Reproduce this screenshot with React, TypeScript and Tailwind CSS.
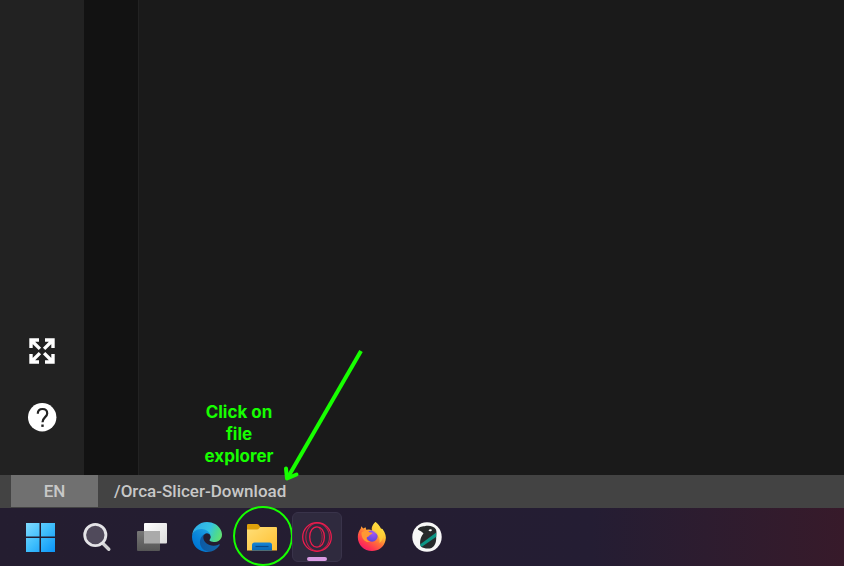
import type { ReactNode } from 'react';

function ExpandIcon() {
  return (
    <svg width="28" height="28" viewBox="0 0 28 28" fill="none" stroke="#fff" strokeWidth="3.4" aria-hidden="true">
      <path d="M3 11V3H11M3.500 3.500L11.900 11.900" />
      <path d="M17 3H25V11M24.500 3.500L16.100 11.900" />
      <path d="M3 17V25H11M3.500 24.500L11.900 16.100" />
      <path d="M17 25H25V17M24.500 24.500L16.100 16.100" />
    </svg>
  );
}

function HelpIcon() {
  return (
    <svg width="29" height="29" viewBox="0 0 29 29" aria-hidden="true">
      <circle cx="14.200" cy="14.200" r="14.200" fill="#fff" />
      <path d="M9.800 10.800C9.800 7.700 11.700 6 14.500 6S19.200 7.800 19.200 10.400C19.200 14 14.500 14.400 14.500 19.200" fill="none" stroke="#222" strokeWidth="2.2" />
      <rect x="13.300" y="21.500" width="2.400" height="2.400" fill="#222" />
    </svg>
  );
}

function WindowsIcon() {
  return (
    <svg width="30" height="30" viewBox="0 0 30 30" aria-hidden="true">
      <defs>
        <linearGradient id="win" x1="0" y1="0" x2="30" y2="30" gradientUnits="userSpaceOnUse">
          <stop stopColor="#86dcff" />
          <stop offset=".5" stopColor="#40bffc" />
          <stop offset="1" stopColor="#0a94f8" />
        </linearGradient>
      </defs>
      <path fill="url(#win)" d="M1 1H14.500V14.500H1zM16 1H30V14.500H16zM1 16H14.500V30H1zM16 16H30V30H16z" />
    </svg>
  );
}

function SearchIcon() {
  return (
    <svg width="30" height="30" viewBox="0 0 30 30" aria-hidden="true">
      <path d="M20.500 21L26.800 27.200" stroke="#d0d0d2" strokeWidth="3.400" strokeLinecap="round" />
      <circle cx="13.300" cy="13" r="10.600" fill="#504a5b" stroke="#e4e4e7" strokeWidth="2.800" />
    </svg>
  );
}

function TaskViewIcon() {
  return (
    <svg width="30" height="30" viewBox="0 0 30 30" aria-hidden="true">
      <defs>
        <linearGradient id="tvBack" x1="0" y1="0" x2="0" y2="1">
          <stop stopColor="#777" />
          <stop offset="1" stopColor="#565656" />
        </linearGradient>
        <linearGradient id="tvFront" x1="0" y1="0" x2="1" y2="1">
          <stop stopColor="#fff" />
          <stop offset="1" stopColor="#dcdcdc" />
        </linearGradient>
      </defs>
      <rect x="7" y="1" width="23" height="20.500" rx="1" fill="url(#tvFront)" />
      <rect x="0" y="9" width="23" height="20" rx="1" fill="url(#tvBack)" />
      <rect x="7" y="9" width="16" height="12.500" fill="#aaa" />
    </svg>
  );
}

function EdgeIcon() {
  return (
    <svg width="30" height="30" viewBox="0 0 256 256" aria-hidden="true">
      <defs>
        <linearGradient id="edgeDark" x1="63" y1="178" x2="241" y2="178" gradientUnits="userSpaceOnUse">
          <stop stopColor="#0c59a4" />
          <stop offset="1" stopColor="#1466a8" />
        </linearGradient>
        <linearGradient id="edgeBlue" x1="157" y1="100" x2="46" y2="221" gradientUnits="userSpaceOnUse">
          <stop stopColor="#1b9de2" />
          <stop offset=".6" stopColor="#0883d9" />
          <stop offset="1" stopColor="#0078d4" />
        </linearGradient>
        <linearGradient id="edgeTop" x1="20" y1="40" x2="250" y2="140" gradientUnits="userSpaceOnUse">
          <stop stopColor="#2eaee8" />
          <stop offset=".5" stopColor="#35c3e4" />
          <stop offset=".75" stopColor="#48d79a" />
          <stop offset="1" stopColor="#66e26e" />
        </linearGradient>
      </defs>
      <path fill="url(#edgeDark)" d="M231 190.500a93.700 93.700 0 0 1-10.500 4.700 101.900 101.900 0 0 1-35.900 6.500c-47.300 0-88.500-32.500-88.500-74.300a31.500 31.500 0 0 1 16.400-27.300c-42.800 1.800-53.800 46.400-53.800 72.500 0 73.900 68.100 81.400 82.800 81.400 7.900 0 19.800-2.300 27-4.600l1.300-.4a128.300 128.300 0 0 0 66.600-52.800 4 4 0 0 0-5.400-5.700z" />
      <path fill="url(#edgeBlue)" d="M105.700 241.400a79.200 79.200 0 0 1-22.700-21.300 80.700 80.700 0 0 1 29.500-120c3.200-1.500 8.500-4.100 15.600-4a32.400 32.400 0 0 1 25.700 13 31.900 31.900 0 0 1 6.300 18.700c0-.2 24.500-79.600-80-79.600-43.900 0-80 41.600-80 78.200a130.200 130.200 0 0 0 12.100 56 128 128 0 0 0 156.400 67 75.500 75.500 0 0 1-62.800-8z" />
      <path fill="url(#edgeTop)" d="M152.300 148.900c-.8 1-3.300 2.500-3.300 5.700 0 2.600 1.700 5.100 4.700 7.200 14.400 10 41.500 8.700 41.600 8.700a59.600 59.600 0 0 0 30.300-8.300 61.400 61.400 0 0 0 30.400-52.900c.3-22.400-8-37.300-11.300-43.900C223.500 23.900 177.700 0 128 0A128 128 0 0 0 0 126.200c.5-36.500 36.800-66 80-66 3.500 0 23.500.3 42 10 16.300 8.600 24.900 18.900 30.800 29.200 6.200 10.700 7.300 24.100 7.300 29.500 0 5.300-2.700 13.300-7.800 20z" />
    </svg>
  );
}

function FolderIcon() {
  return (
    <svg width="32" height="30" viewBox="0 0 32 30" aria-hidden="true">
      <defs>
        <linearGradient id="folder" x1="0" y1="0" x2="1" y2="1">
          <stop stopColor="#ffdf78" />
          <stop offset="1" stopColor="#ffbf30" />
        </linearGradient>
        <linearGradient id="tray" x1="0" y1="0" x2="0" y2="1">
          <stop stopColor="#1585d8" />
          <stop offset="1" stopColor="#0b67b2" />
        </linearGradient>
      </defs>
      <path fill="#dfa10b" d="M1 3.300Q1 2 2.300 2H11Q12 2 12.700 2.800L15 6V8H1z" />
      <path fill="url(#folder)" d="M1 7.500H11Q12.300 7.500 13.200 6.300L14.200 5H30Q31 5 31 6V28.500H1z" />
      <path fill="url(#tray)" d="M6 28.500V23Q6 20.500 8.500 20.500H23.500Q26 20.500 26 23V28.500z" />
      <path d="M9.500 24.500H22.500" stroke="#0a4784" strokeWidth="1.200" />
    </svg>
  );
}

function OperaIcon() {
  return (
    <svg width="32" height="32" viewBox="0 0 32 32" fill="none" stroke="#ee1c4d" aria-hidden="true">
      <circle cx="16" cy="16" r="14.300" strokeWidth="1.300" />
      <path d="M16 1.900C22 1.900 28.500 7.500 28.500 16S22 30.100 16 30.100C9.500 29.500 4.800 23.500 4.800 16S9.500 2.500 16 1.900z" strokeWidth="1.100" opacity=".75" />
      <path d="M16 5.800C11.800 5.800 8.700 10 8.700 16S11.800 26.200 16 26.200S23.400 22 23.400 16S20.200 5.800 16 5.800z" strokeWidth="1.300" />
      <path d="M18 7C22.200 11 22.200 21 18 25" strokeWidth="1" opacity=".6" />
    </svg>
  );
}

function FirefoxIcon() {
  return (
    <svg width="30" height="30" viewBox="0 0 30 30" aria-hidden="true">
      <defs>
        <linearGradient id="fox" x1="24" y1="2" x2="6" y2="28" gradientUnits="userSpaceOnUse">
          <stop stopColor="#fff44f" />
          <stop offset=".3" stopColor="#ffc230" />
          <stop offset=".55" stopColor="#ff7139" />
          <stop offset=".8" stopColor="#ff3750" />
          <stop offset="1" stopColor="#f5156c" />
        </linearGradient>
        <radialGradient id="globe" cx=".6" cy=".25" r=".8">
          <stop stopColor="#a256f5" />
          <stop offset="1" stopColor="#5a45d8" />
        </radialGradient>
      </defs>
      <path fill="url(#fox)" d="M18.500 0C20.500 1.300 22.500 3.800 23.500 6.500L25.500 7C28.500 11 29.500 15 28.500 18.500C27 25 21.500 29 15 29C7 29 .8 23 .8 15C.8 11.500 2 8.500 3.800 6.500L4.300 4.200L6.300 6.400L8.500 5.200L9.500 8C12 7.200 13.500 7.700 15 8.500C14 5.500 16 2 18.500 0z" />
      <circle cx="15" cy="14" r="5.700" fill="url(#globe)" />
      <path fill="#ff9833" d="M4.500 10.500C7 8 10.500 8.200 12.500 10.300L15.500 10.800C15.500 12.200 13.500 12.500 12.300 13.500C12 14.800 10.500 14.500 9.700 15.500C9 17.500 11 19.500 13.500 19.700C9 21.500 4 17 4.500 10.500z" />
      <path fill="#ffd43b" d="M15 8.500C17 6 17.500 3 18.500 0C23 3.500 26.500 9 26 15C25.500 18 24 20 22.500 21C23.500 15 20 11.500 15 8.500z" opacity=".7" />
    </svg>
  );
}

function OrcaIcon() {
  return (
    <svg width="30" height="30" viewBox="0 0 30 30" aria-hidden="true">
      <circle cx="15" cy="15" r="14.700" fill="#f7f7f7" />
      <path fill="#272a2b" d="M5.800 7.500C6.500 5 9.500 4.500 12.500 4.300C17 3 22 4.300 24 7.500C25 10 24 13 24.200 16C24.300 21 22.500 24.500 19.500 26C16.500 27.200 11.500 26.500 9 24.800C7.200 21 8 15.500 11.500 11.500C10 9.500 8 9 5.800 7.500z" />
      <path fill="#0d9585" d="M24.200 10.500L24.300 14.800L9.500 25L8 22.500z" />
      <path fill="#fff" d="M16.500 8.500C17.500 6.800 19.500 6.900 20 8C19.500 9.400 17.500 9.700 16.500 8.500z" />
    </svg>
  );
}

function TaskButton({ label, active, wide, children }: { label: string; active?: boolean; wide?: boolean; children: ReactNode }) {
  return (
    <button
      type="button"
      aria-label={label}
      className={`relative flex h-[50px] shrink-0 items-center justify-center rounded-md ${wide ? 'w-[54px]' : 'w-[50px]'} ${active ? 'border border-[#39334a] bg-[#2f2a3e]' : ''}`}
    >
      {children}
      {active && <span className="absolute bottom-0 h-1 w-5 rounded-full bg-[#d99be3]" />}
    </button>
  );
}

export default function App() {
  return (
    <div className="relative flex min-h-screen flex-col overflow-hidden bg-[#1a1a1a] font-['Roboto',sans-serif]">
      <div className="flex flex-1">
        <nav className="flex w-[84px] shrink-0 flex-col items-center justify-end gap-[38px] bg-[#222222] pb-[43px]">
          <button type="button" aria-label="Full screen"><ExpandIcon /></button>
          <button type="button" aria-label="Help"><HelpIcon /></button>
        </nav>
        <aside className="w-[55px] shrink-0 border-r border-[#222222] bg-[#121212]" />
        <main className="flex-1" />
      </div>

      <footer className="flex h-[33px] shrink-0 bg-[#434343] pl-[11px] text-[17px] leading-8 font-medium text-[#c8c8c8]">
        <button type="button" className="h-8 w-[87px] bg-[#707070]">EN</button>
        <span className="pl-4">/Orca-Slicer-Download</span>
      </footer>

      <div className="flex h-[58px] shrink-0 items-center gap-[5px] bg-linear-to-r from-[#241d30] via-[#241d33] via-70% to-[#371a2a] pl-[13px]">
        <TaskButton label="Start" wide><WindowsIcon /></TaskButton>
        <TaskButton label="Search"><SearchIcon /></TaskButton>
        <TaskButton label="Task view"><TaskViewIcon /></TaskButton>
        <TaskButton label="Edge"><EdgeIcon /></TaskButton>
        <TaskButton label="File Explorer">
          <FolderIcon />
          <span className="absolute -top-[6px] -left-1 size-[60px] rounded-full border-2 border-[#17ff00]" />
        </TaskButton>
        <TaskButton label="Opera GX" active><OperaIcon /></TaskButton>
        <TaskButton label="Firefox"><FirefoxIcon /></TaskButton>
        <TaskButton label="Orca Slicer"><OrcaIcon /></TaskButton>
      </div>

      <p className="absolute bottom-[99px] left-[199px] w-20 text-center font-['Inter',sans-serif] text-[17px] leading-[22px] font-bold text-[#17ff00]">
        Click on file explorer
      </p>
      <svg className="absolute bottom-[80px] left-[280px]" width="86" height="140" viewBox="0 0 86 140" fill="none" stroke="#17ff00" strokeWidth="4" aria-hidden="true">
        <path d="M81 5L7.500 132" />
        <path d="M6 122.500L7 132.500L16.500 128.500" strokeLinecap="round" strokeLinejoin="round" />
      </svg>
    </div>
  );
}
